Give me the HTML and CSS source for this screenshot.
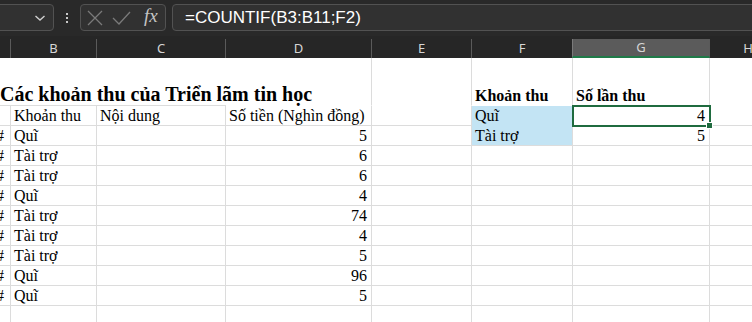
FILE: index.html
```html
<!doctype html>
<html>
	<head>
		<title>Các khoản thu</title>
		<meta charset="UTF-8">
		<link rel="stylesheet" href="styles.css">
	</head>
	<body>
		<div class="bar">
			<div class="namebox">
				<svg width="12" height="8" viewBox="0 0 12 8"><path d="M1.5 2 L6 6 L10.5 2" fill="none" stroke="#cfcfcf" stroke-width="1.4"/></svg>
			</div>
			<div class="dots"><span></span><span></span><span></span></div>
			<div class="btns">
				<svg width="18" height="18" viewBox="0 0 18 18"><path d="M2 2 L16 16 M16 2 L2 16" stroke="#7a7a7a" stroke-width="1.3"/></svg>
				<svg width="20" height="18" viewBox="0 0 20 18"><path d="M2 9 L8 15 L19 3" fill="none" stroke="#7a7a7a" stroke-width="1.3"/></svg>
				<span class="fx">fx</span>
			</div>
			<div class="formula">=COUNTIF(B3:B11;F2)</div>
		</div>
		<div class="heads">
			<div class="h">&nbsp;</div>
			<div class="h">B</div>
			<div class="h">C</div>
			<div class="h">D</div>
			<div class="h">E</div>
			<div class="h">F</div>
			<div class="h sel">G</div>
			<div class="h last">H</div>
		</div>
		<div class="sheet">
			<!-- tieu de -->
			<div class="c tall nob"><span class="title">Các khoản thu của Triển lãm tin học</span></div>
			<div class="c tall nob"></div>
			<div class="c tall nob"></div>
			<div class="c tall noh"></div>
			<div class="c tall noh"></div>
			<div class="c tall noh"><b>Khoản thu</b></div>
			<div class="c tall noh"><b>Số lần thu</b></div>
			<div class="c tall noh"></div>

			<div class="c"></div>
			<div class="c">Khoản thu</div>
			<div class="c">Nội dung</div>
			<div class="c">Số tiền (Nghìn đồng)</div>
			<div class="c"></div>
			<div class="c blue noh">Quĩ</div>
			<div class="c num active">4<i class="handle"></i></div>
			<div class="c"></div>

			<div class="c hash">##</div>
			<div class="c">Quĩ</div>
			<div class="c"></div>
			<div class="c num">5</div>
			<div class="c"></div>
			<div class="c blue">Tài trợ</div>
			<div class="c num">5</div>
			<div class="c"></div>

			<div class="c hash">##</div><div class="c">Tài trợ</div><div class="c"></div><div class="c num">6</div><div class="c"></div><div class="c"></div><div class="c"></div><div class="c"></div>
			<div class="c hash">##</div><div class="c">Tài trợ</div><div class="c"></div><div class="c num">6</div><div class="c"></div><div class="c"></div><div class="c"></div><div class="c"></div>
			<div class="c hash">##</div><div class="c">Quĩ</div><div class="c"></div><div class="c num">4</div><div class="c"></div><div class="c"></div><div class="c"></div><div class="c"></div>
			<div class="c hash">##</div><div class="c">Tài trợ</div><div class="c"></div><div class="c num">74</div><div class="c"></div><div class="c"></div><div class="c"></div><div class="c"></div>
			<div class="c hash">##</div><div class="c">Tài trợ</div><div class="c"></div><div class="c num">4</div><div class="c"></div><div class="c"></div><div class="c"></div><div class="c"></div>
			<div class="c hash">##</div><div class="c">Tài trợ</div><div class="c"></div><div class="c num">5</div><div class="c"></div><div class="c"></div><div class="c"></div><div class="c"></div>
			<div class="c hash">##</div><div class="c">Quĩ</div><div class="c"></div><div class="c num">96</div><div class="c"></div><div class="c"></div><div class="c"></div><div class="c"></div>
			<div class="c hash">##</div><div class="c">Quĩ</div><div class="c"></div><div class="c num">5</div><div class="c"></div><div class="c"></div><div class="c"></div><div class="c"></div>
			<div class="c"></div><div class="c"></div><div class="c"></div><div class="c"></div><div class="c"></div><div class="c"></div><div class="c"></div><div class="c"></div>
		</div>
	</body>
</html>
```
FILE: styles.css
```css
body {
	margin: 0;
	width: 752px;
	height: 322px;
	overflow: hidden;
	background: #ffffff;
	font-family: "Liberation Serif", serif;
}
.bar {
	height: 36px;
	background: #292929;
	display: flex;
	align-items: flex-start;
	padding-top: 4px;
	box-sizing: border-box;
}
.namebox, .btns, .formula {
	height: 27px;
	box-sizing: border-box;
	border: 1px solid #525252;
	border-radius: 4px;
	background: #313131;
	display: flex;
	align-items: center;
}
.namebox {
	width: 60px;
	margin-left: -6px;
	justify-content: flex-end;
	padding-right: 7px;
}
.dots {
	width: 26px;
	height: 27px;
	display: flex;
	flex-direction: column;
	align-items: center;
	justify-content: center;
	gap: 2px;
}
.dots span {
	width: 2px;
	height: 2px;
	background: #c8c8c8;
}
.btns {
	width: 86px;
	padding-left: 5px;
	gap: 7px;
}
.fx {
	font-family: "Liberation Serif", serif;
	font-style: italic;
	font-size: 19px;
	color: #c4c4c4;
	margin-left: 6px;
	margin-top: -3px;
}
.formula {
	margin-left: 6px;
	flex: 1;
	margin-right: -10px;
	padding-left: 12px;
	font-family: "Liberation Sans", sans-serif;
	font-size: 17px;
	color: #ffffff;
}
.heads {
	display: grid;
	grid-template-columns: 11px 86px 129px 146px 100px 101px 137px 76px;
	height: 22px;
	background: #262626;
	overflow: hidden;
}
.h {
	font-family: "Noto Sans", sans-serif;
	font-size: 13px;
	color: #d6d6d6;
	text-align: center;
	border-right: 1px solid #5a5a5a;
	margin-top: 3px;
	line-height: 19px;
}
.h.sel {
	background: #5b5b5b;
	border-left: 1px solid #7a7a7a;
	border-bottom: 2px solid #1f7a48;
	margin-left: -1px;
	line-height: 17px;
}
.h.last {
	border-right: none;
}
.sheet {
	display: grid;
	grid-template-columns: 11px 86px 129px 146px 100px 101px 137px 76px;
	grid-template-rows: 48px;
	grid-auto-rows: 20px;
	font-size: 16px;
	color: #000000;
}
.c {
	border-right: 1px solid #dcdcdc;
	border-bottom: 1px solid #dcdcdc;
	padding-left: 3px;
	line-height: 19px;
	white-space: nowrap;
	position: relative;
}
.c.tall {
	display: flex;
	align-items: flex-end;
}
.c.nob {
	border-right: none;
}
.c.noh {
	border-bottom-color: transparent;
}
.title {
	font-weight: bold;
	font-size: 20px;
	line-height: 22px;
	margin-left: -3px;
}
.sheet > .c:first-child {
	overflow: visible;
	z-index: 1;
}
.hash {
	padding: 0;
	overflow: hidden;
	direction: rtl;
	text-align: right;
	padding-right: 6px;
}
.num {
	text-align: right;
	padding-right: 4px;
}
.blue {
	background: #c3e4f4;
}
.active {
	outline: 2px solid #1f6b3f;
	outline-offset: -1px;
	z-index: 2;
}
.handle {
	position: absolute;
	right: -4px;
	bottom: -4px;
	width: 5px;
	height: 5px;
	background: #1f6b3f;
	border: 1px solid #ffffff;
}
```
